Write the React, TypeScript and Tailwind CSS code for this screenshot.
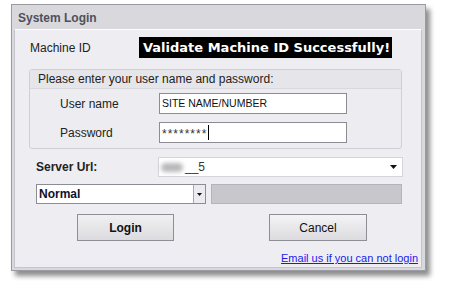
import React from "react";

const sans = { fontFamily: '"Liberation Sans", Arial, sans-serif' };

function Arrow() {
  return (
    <svg width="7" height="4" viewBox="0 0 7 4">
      <path d="M0 0h7L3.5 4z" fill="#111" />
    </svg>
  );
}

export default function App() {
  return (
    <div className="h-[281px] w-[451px] bg-white pl-[11px] pt-[4px]" style={sans}>
      <div className="flex h-[267px] w-[415px] flex-col border border-[#9a9aa2] bg-[#d8d8dd] shadow-[4px_5px_5px_rgba(0,0,0,0.45)]">
        {/* title bar */}
        <div className="flex h-[24px] items-center pl-[6px] pt-[1px] text-[12px] font-bold text-[#50505c]">
          System Login
        </div>

        {/* body */}
        <div className="mb-[2px] ml-[2px] mr-[3px] flex flex-1 flex-col border border-[#c4c4cc] border-t-white bg-[#eeeef2]">
          <div className="mt-[7px] flex items-center">
            <span className="w-[124px] pl-[15px] text-[12px] text-[#222]">Machine ID</span>
            <div
              className="flex h-[21px] w-[253px] items-center bg-black pl-[4px] text-[13px] font-bold text-white"
              style={{ fontFamily: '"DejaVu Sans", Verdana, sans-serif' }}
            >
              Validate Machine ID Successfully!
            </div>
          </div>

          {/* credentials group */}
          <div className="ml-[14px] mt-[11px] flex h-[80px] w-[373px] flex-col rounded-[3px] border border-[#cfcfd6] bg-[#ededf1]">
            <div className="flex h-[19px] items-center border-b border-[#d8d8de] bg-[#e6e6ea] pl-[8px] text-[12px] text-[#222]">
              Please enter your user name and password:
            </div>
            <div className="mt-[4px] flex items-center">
              <span className="w-[129px] pl-[30px] text-[12px] text-[#222]">User name</span>
              <div className="flex h-[21px] w-[188px] items-center border border-[#8c8c94] bg-white pl-[2px] text-[10.5px] text-[#111]">
                SITE NAME/NUMBER
              </div>
            </div>
            <div className="mt-[8px] flex items-center">
              <span className="w-[129px] pl-[30px] text-[12px] text-[#222]">Password</span>
              <div className="flex h-[21px] w-[188px] items-center border border-[#8c8c94] bg-white pl-[2px] text-[#333]">
                <span className="pt-[3px] text-[12px] tracking-[1px]">********</span>
                <span className="ml-[1px] h-[15px] w-px bg-black" />
              </div>
            </div>
          </div>

          {/* server url */}
          <div className="mt-[8px] flex items-center">
            <span className="w-[143px] pl-[21px] text-[12px] font-bold text-[#222]">Server Url:</span>
            <div className="flex h-[20px] w-[245px] items-center justify-between border border-[#d4d4da] bg-white pl-[2px] pr-[5px]">
              <span className="flex items-center text-[12px] text-[#333]">
                <span className="h-[9px] w-[22px] rounded-full bg-[#b8b8bc] blur-[2px]" />
                <span className="ml-[2px]">__5</span>
              </span>
              <Arrow />
            </div>
          </div>

          {/* mode */}
          <div className="ml-[21px] mt-[7px] flex items-center gap-[5px]">
            <div className="flex h-[20px] w-[170px] items-stretch border border-[#8c8c94] bg-white">
              <span className="flex flex-1 items-center pl-[2px] text-[12px] font-bold text-[#10102a]">Normal</span>
              <span className="flex w-[12px] items-center justify-center border-l border-[#a8a8b0] bg-[#ececf0]">
                <svg width="5" height="3" viewBox="0 0 5 3">
                  <path d="M0 0h5L2.5 3z" fill="#111" />
                </svg>
              </span>
            </div>
            <div className="h-[20px] w-[191px] border border-[#b4b4bb] bg-[#c8c8cc]" />
          </div>

          {/* buttons */}
          <div className="mt-[10px] flex items-center">
            <button className="ml-[62px] flex h-[27px] w-[97px] items-center justify-center border border-[#8e8e96] bg-gradient-to-b from-[#f0f0f2] to-[#dcdce0] text-[12px] font-bold text-[#111]">
              Login
            </button>
            <button className="ml-[95px] flex h-[27px] w-[98px] items-center justify-center border border-[#8e8e96] bg-gradient-to-b from-[#f4f4f6] to-[#dcdce0] text-[12px] text-[#111]">
              Cancel
            </button>
          </div>

          <div className="mt-[10px] flex justify-end pr-[3px]">
            <a href="#" className="text-[11px] leading-[14px] text-[#1a1aee] underline">
              Email us if you can not login
            </a>
          </div>
        </div>
      </div>
    </div>
  );
}
